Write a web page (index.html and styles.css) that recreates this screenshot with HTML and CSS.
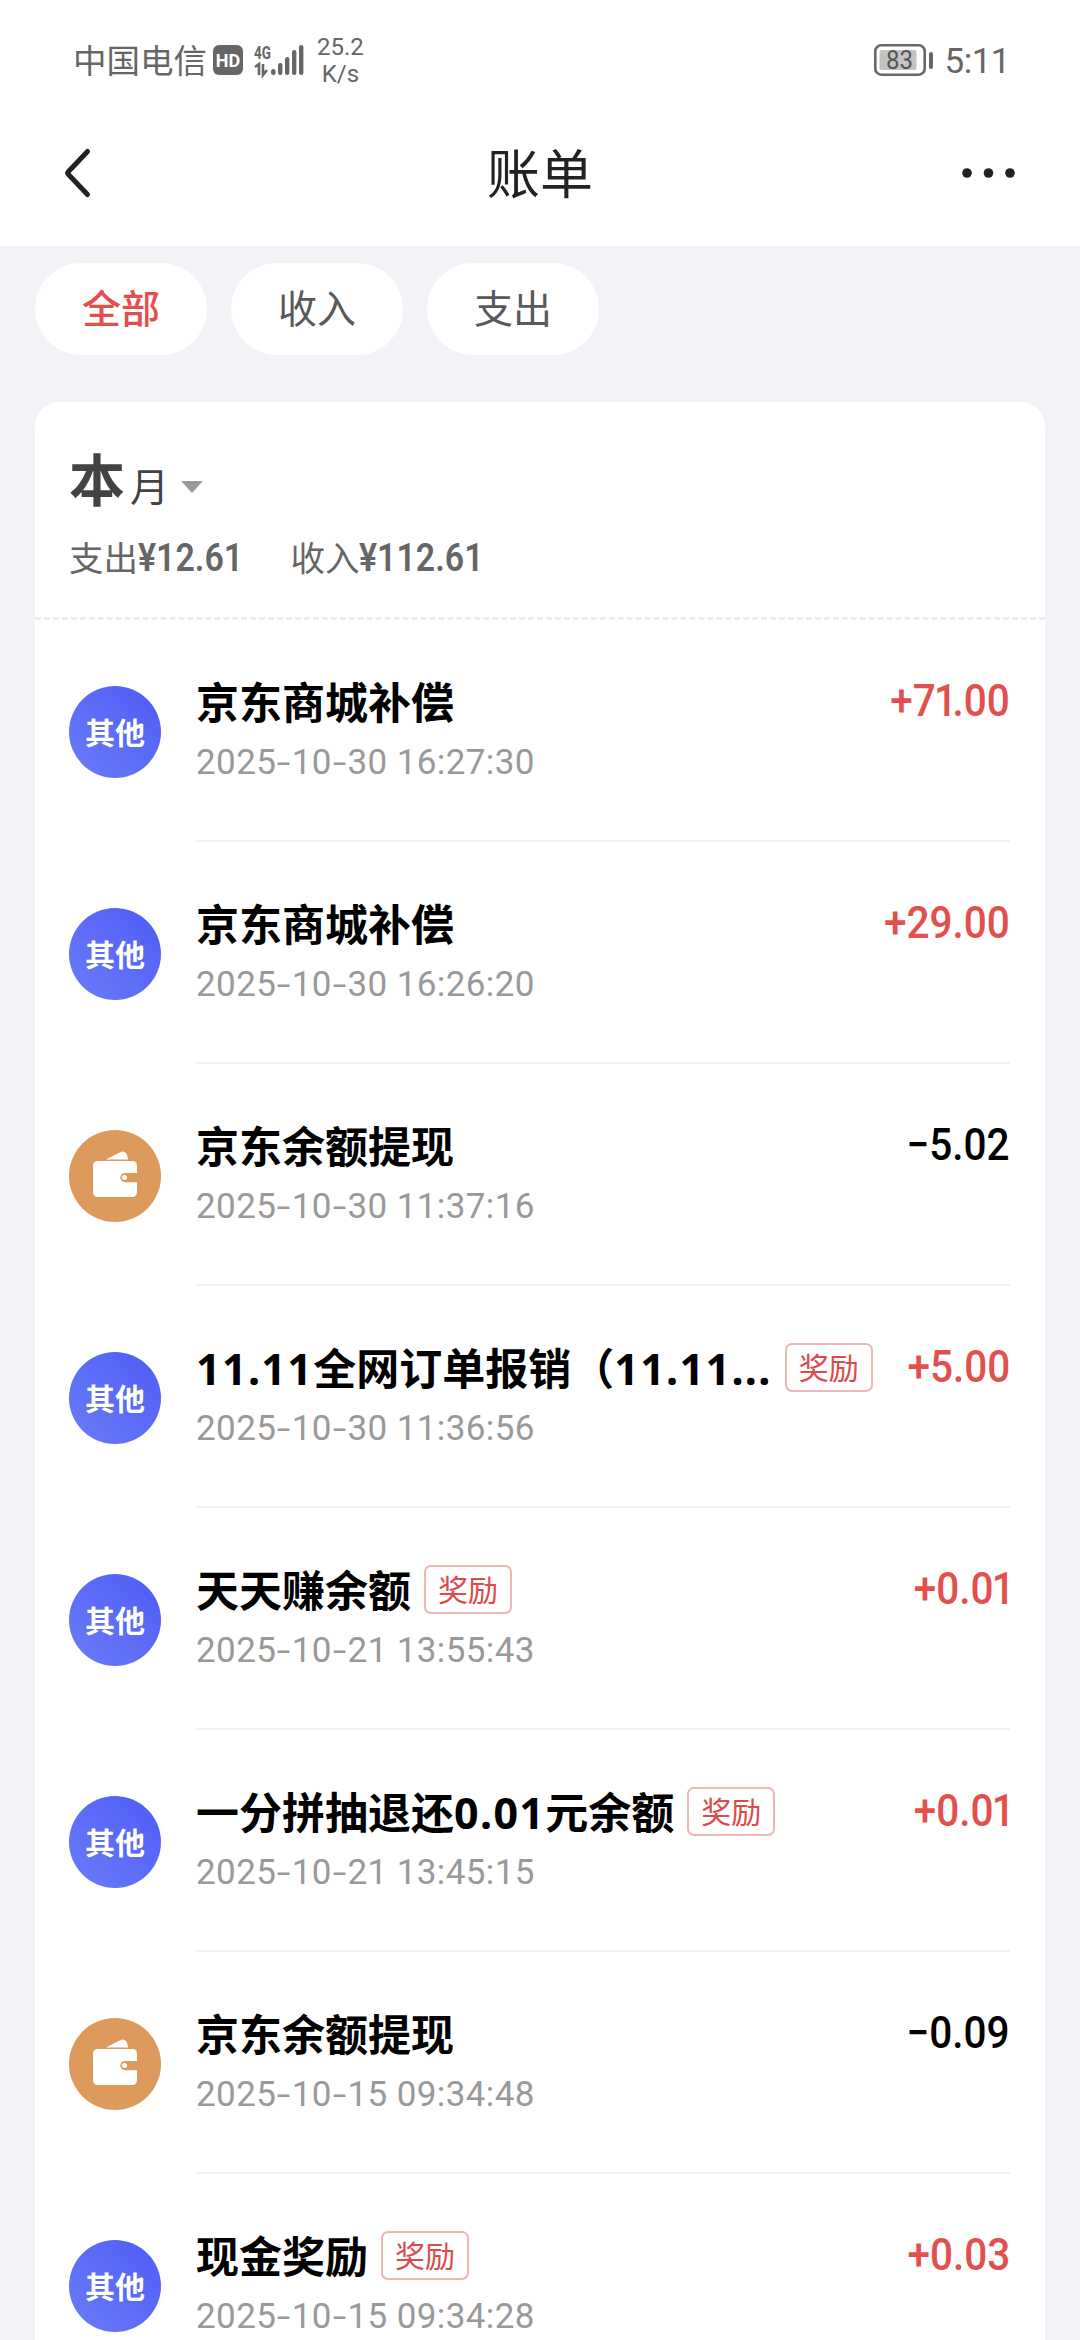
FILE: index.html
```html
<!DOCTYPE html>
<html lang="zh-CN">
<head>
    <meta charset="UTF-8">
    <meta name="viewport" content="width=device-width, initial-scale=1.0">
    <title>账单</title>
    <link rel="stylesheet" href="styles.css">
</head>
<body>
    <header class="header">
        <div class="status-bar">
            <span class="carrier">中国电信</span>
            <span class="hd">HD</span>
            <svg class="signal" width="50" height="34" viewBox="0 0 50 34">
                <text class="net" x="0" y="15.5" textLength="17" lengthAdjust="spacingAndGlyphs">4G</text>
                <path d="M1 24l4-3v11M9 21v11l4-5" fill="none" stroke="#666" stroke-width="2.6"/>
                <g fill="#666">
                    <rect x="17" y="26" width="4.6" height="6" rx="2.3"/>
                    <rect x="24" y="20" width="4.4" height="12" rx="2.2"/>
                    <rect x="31" y="14" width="4.4" height="18" rx="2.2"/>
                    <rect x="38" y="7" width="4.4" height="25" rx="2.2"/>
                    <rect x="45" y="2" width="4.4" height="30" rx="2.2"/>
                </g>
            </svg>
            <span class="speed">25.2<br>K/s</span>
            <svg class="battery" width="60" height="32" viewBox="0 0 60 32">
                <rect x="1.3" y="1.3" width="49.4" height="29.4" rx="6" fill="none" stroke="#666" stroke-width="2.6"/>
                <rect x="5.5" y="6" width="37" height="20" rx="2" fill="#c3c3c3"/>
                <rect x="55" y="8" width="4" height="17" rx="2" fill="#666"/>
                <text class="level" x="12" y="25" textLength="27" lengthAdjust="spacingAndGlyphs">83</text>
            </svg>
            <span class="time">5:11</span>
        </div>
        <nav class="nav">
            <svg class="back" width="30" height="54" viewBox="0 0 30 54">
                <path d="M24.5 5.5L5.5 25.5Q4 27 5.5 28.5L24.5 48.5" fill="none" stroke="#222" stroke-width="5" stroke-linecap="round"/>
            </svg>
            <h1 class="nav-title">账单</h1>
            <svg class="more" width="54" height="12" viewBox="0 0 54 12" fill="#222">
                <circle cx="6" cy="6" r="4.8"/>
                <circle cx="27.5" cy="6" r="4.8"/>
                <circle cx="49" cy="6" r="4.8"/>
            </svg>
        </nav>
    </header>

    <div class="tabs">
        <span class="tab active">全部</span>
        <span class="tab">收入</span>
        <span class="tab">支出</span>
    </div>

    <main class="card">
        <section class="summary">
            <div class="month"><b>本</b><span>月</span><i class="arrow"></i></div>
            <div class="totals">
                <span class="total">支出<b class="sum">¥12.61</b></span>
                <span class="total">收入<b class="sum">¥112.61</b></span>
            </div>
        </section>

        <ul class="list" id="billList"></ul>
    </main>

    <script>
        const bills = [
            { title: '京东商城补偿', time: '2025-10-30 16:27:30', amount: '+71.00' },
            { title: '京东商城补偿', time: '2025-10-30 16:26:20', amount: '+29.00' },
            { title: '京东余额提现', time: '2025-10-30 11:37:16', amount: '-5.02' },
            { title: '11.11全网订单报销（11.11...', time: '2025-10-30 11:36:56', amount: '+5.00', tag: '奖励' },
            { title: '天天赚余额', time: '2025-10-21 13:55:43', amount: '+0.01', tag: '奖励' },
            { title: '一分拼抽退还0.01元余额', time: '2025-10-21 13:45:15', amount: '+0.01', tag: '奖励' },
            { title: '京东余额提现', time: '2025-10-15 09:34:48', amount: '-0.09' },
            { title: '现金奖励', time: '2025-10-15 09:34:28', amount: '+0.03', tag: '奖励' }
        ];

        const wallet = `
            <svg width="92" height="92" viewBox="0 0 92 92">
                <path d="M37 29.5l14-7.3c4-2 7 .5 7.5 4.5l.6 2.8z" fill="#fff"/>
                <rect x="24" y="31" width="44" height="36" rx="4.5" fill="#fff"/>
                <path d="M68 43H56a4.6 4.6 0 0 0 0 9.200h12z" fill="#de995c"/>
                <circle cx="55.5" cy="47.6" r="2.5" fill="#fff"/>
            </svg>`;

        document.getElementById('billList').innerHTML = bills.map(function (bill) {
            const out = bill.amount[0] === '-';
            const amount = bill.amount.replace('-', '−').replace(/1/g, '<span class="one">1</span>');
            const title = bill.title.replace(/[\d.]+/g, '<span class="num">$&</span>');
            const time = bill.time.replace(/-/g, '<span class="dash">-</span>');
            return `
                <li class="bill">
                    <div class="icon ${out ? 'icon-wallet' : 'icon-other'}">${out ? wallet : '其他'}</div>
                    <div class="detail">
                        <div class="info">
                            <div class="title">${title}${bill.tag ? `<span class="tag">${bill.tag}</span>` : ''}</div>
                            <div class="date">${time}</div>
                        </div>
                        <div class="amount ${out ? 'out' : ''}">${amount}</div>
                    </div>
                </li>`;
        }).join('');
    </script>
</body>
</html>
```

FILE: styles.css
```css
* {
    box-sizing: border-box;
}
body {
    margin: 0;
    height: 2340px;
    overflow: hidden;
    background-color: #f2f2f7;
    font-family: Roboto, "Noto Sans CJK SC", sans-serif;
    color: #000;
}
svg {
    display: block;
    flex: none;
    overflow: visible;
}
.header {
    height: 246px;
    background-color: #fff;
}
.status-bar {
    display: flex;
    align-items: center;
    height: 120px;
    padding: 0 70px 0 73px;
    color: #666;
}
.carrier {
    margin-top: -2px;
    font-size: 33.5px;
    line-height: 40px;
    font-weight: 400;
    font-family: "Noto Sans CJK SC", sans-serif;
}
.hd {
    width: 30px;
    height: 30px;
    margin-left: 6px;
    border-radius: 6px;
    background-color: #666;
    color: #fff;
    font-size: 18px;
    font-weight: 700;
    line-height: 31px;
    text-align: center;
}
.signal {
    margin-left: 11px;
}
.net {
    font-size: 19px;
    font-weight: 700;
    fill: #666;
}
.speed {
    margin: 2px 0 0 13px;
    font-size: 24px;
    font-weight: 400;
    line-height: 27px;
    text-align: center;
}
.battery {
    margin-left: auto;
}
.level {
    font-size: 26px;
    fill: #555;
}
.time {
    margin: 2px 0 0 11px;
    font-size: 35px;
    font-weight: 400;
    letter-spacing: -.5px;
}
.nav {
    display: flex;
    align-items: center;
    justify-content: space-between;
    height: 106px;
    padding: 0 65px 0 63px;
}
.back {
    margin-right: 24px;
}
.nav-title {
    margin: 5px 0 0 2px;
    font-size: 53px;
    font-weight: 400;
    line-height: 80px;
    color: #222;
}
.tabs {
    display: flex;
    gap: 24px;
    padding: 17px 35px 0;
}
.tab {
    width: 172px;
    height: 92px;
    border-radius: 46px;
    background-color: #fff;
    color: #595959;
    font-size: 39px;
    line-height: 95px;
    text-align: center;
}
.tab.active {
    color: #e2504d;
    font-weight: 500;
}
.card {
    width: 1010px;
    margin: 47px 35px 0;
    border-radius: 24px 24px 0 0;
    background-color: #fff;
}
.summary {
    height: 218px;
    padding: 44px 34px 0;
    border-bottom: 3px dashed #ececec;
}
.month {
    display: flex;
    align-items: baseline;
    height: 72px;
    color: #434343;
    line-height: 72px;
}
.month b {
    font-size: 56px;
}
.month span {
    margin-left: 5px;
    font-size: 39px;
}
.arrow {
    align-self: flex-start;
    margin: 35px 0 0 12px;
    border: 11px solid transparent;
    border-top: 12px solid #999;
    border-bottom: 0;
}
.totals {
    display: flex;
    height: 60px;
    margin-top: 10px;
    color: #666;
    font-size: 34.5px;
    line-height: 60px;
}
.total {
    margin-right: 33px;
    white-space: nowrap;
}
.sum {
    display: inline-block;
    font-size: 38.5px;
    font-weight: 600;
    transform: scaleX(.88);
    transform-origin: left;
}
.list {
    margin: 0;
    padding: 0;
    list-style: none;
}
.bill {
    display: flex;
    height: 222px;
    padding: 0 35px 0 34px;
}
.icon {
    flex: none;
    width: 92px;
    height: 92px;
    margin: 66px 35px 0 0;
    border-radius: 50%;
}
.icon-other {
    background: linear-gradient(45deg, #6b7cf8, #4d5cf6);
    color: #fff;
    font-size: 30px;
    font-weight: 700;
    line-height: 95px;
    text-align: center;
}
.icon-wallet {
    background-color: #de995c;
}
.detail {
    display: flex;
    flex: 1;
    justify-content: space-between;
    border-bottom: 2px solid #f0f0f2;
}
.title {
    display: flex;
    align-items: center;
    height: 60px;
    margin-top: 53px;
    font-family: "Noto Sans", "Noto Sans CJK SC", sans-serif;
    font-size: 43px;
    font-weight: 700;
    line-height: 60px;
    white-space: nowrap;
}
.num {
    letter-spacing: 1.35px;
}
.tag {
    width: 88px;
    height: 49px;
    margin: -3px 0 0 13px;
    border: 2px solid #f0b5b5;
    border-radius: 7px;
    color: #dc4a4a;
    font-size: 30px;
    font-weight: 400;
    line-height: 45px;
    text-align: center;
}
.date {
    height: 50px;
    margin-top: 5px;
    color: #999;
    font-size: 35px;
    letter-spacing: .4px;
    line-height: 50px;
}
/* wider hyphen between the date parts */
.dash {
    display: inline-block;
    width: 15.5px;
    transform: scaleX(1.4);
    text-align: center;
}
.amount {
    margin-top: 51px;
    color: #e2504d;
    font-size: 45px;
    font-weight: 500;
    line-height: 60px;
    transform: scaleX(.9);
    transform-origin: right;
}
.amount.out {
    color: #000;
}
.one {
    margin: 0 -5px 0 -2px;
}
```
